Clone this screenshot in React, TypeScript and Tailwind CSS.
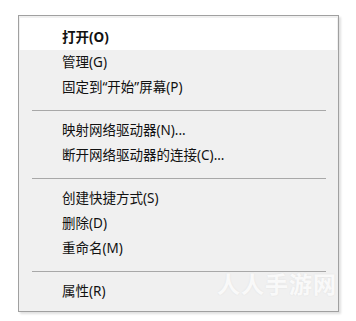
import React from "react";

type Entry = { label: string; bold?: boolean; active?: boolean } | "sep";

const entries: Entry[] = [
  { label: "打开(O)", bold: true, active: true },
  { label: "管理(G)" },
  { label: "固定到“开始”屏幕(P)" },
  "sep",
  { label: "映射网络驱动器(N)..." },
  { label: "断开网络驱动器的连接(C)..." },
  "sep",
  { label: "创建快捷方式(S)" },
  { label: "删除(D)" },
  { label: "重命名(M)" },
  "sep",
  { label: "属性(R)" },
];

const App: React.FC = () => {
  return (
    <div
      className="w-[356px] h-[321px] bg-white pt-[15px] pl-[18px]"
      style={{ fontFamily: '"Noto Sans", "Noto Sans CJK SC", sans-serif' }}
    >
      {/* context menu */}
      <div className="relative w-[321px] h-[297px] bg-[#f0f0f0] border border-[#a0a0a0] shadow-[2px_2px_2px_rgba(0,0,0,0.12)] pt-[2px] px-[1px]">
        {entries.map((e, i) =>
          e === "sep" ? (
            <div key={i} className="h-[18px] pt-[10px] pl-[12px] pr-[11px]">
              <div className="h-px w-full bg-[#a8a8a8]" />
            </div>
          ) : (
            <div
              key={i}
              className={
                "flex items-center pl-[42px] text-[13.5px] text-[#111] " +
                (e.active ? "h-[32px] pt-[7px] bg-white" : "h-[25px]") +
                (e.bold ? " font-bold" : "")
              }
            >
              {e.label}
            </div>
          )
        )}

        {/* watermark */}
        <div className="absolute right-[1px] bottom-[10px] text-[23px] font-bold text-white/80 tracking-[1px] [text-shadow:0_0_2px_rgba(0,0,0,0.08)]">
          人人手游网
        </div>
      </div>
    </div>
  );
};

export default App;
